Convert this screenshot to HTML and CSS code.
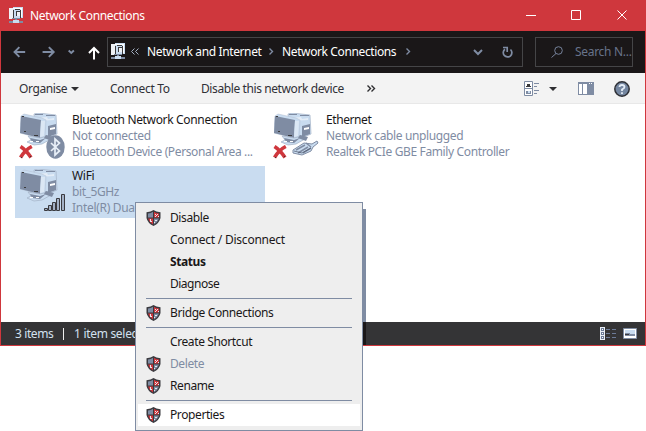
FILE: index.html
```
<!DOCTYPE html>
<html lang="en">
<head>
<meta charset="utf-8">
<title>Network Connections</title>
<link rel="stylesheet" href="styles.css">
</head>
<body>
<svg class="defs" aria-hidden="true">
  <symbol id="net" viewBox="0 0 16 17">
    <path fill="#eef1f5" d="M1 1h4v11H1z"/>
    <path fill="#c9dcf0" d="M5 0h10v11H5z"/>
    <path fill="#fff" d="M5 1h9v1H5zM13 2h1v8h-1z"/>
    <path fill="#3a3a3c" d="M5 3h1v8H5zM7 2h5v1H7zM8 4h4v1H8zM8 4h1v5H8zM12 3h1v8h-1z"/>
    <path fill="#eef1f5" d="M9 5h3v4H9z"/>
    <path fill="#7f8ca3" d="M4 11h8v1H4zM7 12h2v2H7zM1 14h14v2H1z"/>
    <path fill="#c9dcf0" d="M5 13h6v3H5z"/>
  </symbol>
  <symbol id="pcs" viewBox="0 0 40 36">
    <path fill="#c9dcf0" stroke="#a3b1c6" stroke-width=".7" d="M14 1l4-1 18 2 1 19-7 3-15-5z"/>
    <path fill="#7f8ca3" d="M28 13l8-2v10l-8 3zM15 1h8v1h-8zM26 2h9v1h-9z"/>
    <path fill="#e4edf7" d="M17 5l10-1 1 2 6-1v2l-17 1z"/>
    <path fill="#fff" d="M30 15l5-1v2l-5 1z"/>
    <path fill="#c9dcf0" stroke="#b3bfd0" stroke-width=".5" d="M1 3l3-2 18 4 4 2-1 17-6 1L0 20z"/>
    <path fill="#7f8ca3" d="M1 3l20 4-1 18L0 20z"/>
    <path fill="#dbe7f4" d="M21 8h4l-1 15-4 1z"/>
    <path fill="#3a3a3c" d="M2 3h2v1H2zM4 18h2v1H4zM14 22h4v1h-4z"/>
    <path fill="#c9dcf0" stroke="#a3b1c6" stroke-width=".7" d="M8 23l12 2 8-2 3 3-9 5-8 1-7-3 4-2z"/>
    <path fill="#7f8ca3" d="M10 25l10 2 6-2-6 5-8-1zM26 22l8 2-2 4-8-3z"/>
    <path fill="#fff" d="M10 28h3v1h-3zM16 28h3v1h-3z"/>
  </symbol>
  <symbol id="cross" viewBox="0 0 14 14">
    <path fill="none" stroke="#cf373d" stroke-width="3.600" d="M1.500 1.500Q7 5 12 12.500M12.800 1.500Q6 5 1.500 12.500"/>
    <path fill="#3a3a3c" d="M11 11h1v1h-1zM2 12h1v1H2z"/>
  </symbol>
  <symbol id="shield" viewBox="0 0 15 16">
    <path fill="#3a3a3f" d="M7.500 0Q10 2 14.500 2.200V8Q13.500 13 7.500 16Q1.500 13 .5 8V2.200Q5 2 7.500 0z"/>
    <path fill="#7f8ca3" d="M7 1.800V7.500H2V3.500Q5 3.200 7 1.800zM8 8.500h5q-1 3.500-5 6z"/>
    <path fill="#cf373d" d="M8 1.800q2 1.400 5 1.700v4H8zM7 8.500v6q-4-2.500-5-6z"/>
    <path fill="#e6e9ee" d="M9 4h1v1H9zM11 4h1v1h-1zM10 5h1v1h-1zM9 6h1v1H9zM12 6h1v1h-1zM4 9h1v3H4zM5 11h1v1H5zM9 10h2v1H9zM8 12h1v1H8z"/>
  </symbol>
</svg>

<div class="window">
  <header class="titlebar">
    <svg class="i-net"><use href="#net"/></svg>
    <span class="title">Network Connections</span>
    <svg class="caption" width="102" height="31" viewBox="0 0 102 31"><path fill="none" stroke="#fff" d="M0 15.500h10M45.500 10.500h9v9h-9zM91.500 10.500l9 9M100.500 10.500l-9 9"/></svg>
  </header>

  <nav class="nav">
    <svg class="arrows" width="90" height="30" viewBox="0 0 90 30">
      <g fill="none" stroke="#7f8ca3" stroke-width="2"><path d="M25 15H14M19 10l-5 5 5 5M43 15h11.500M49.500 10l5 5-5 5"/><path d="M70 13.500l2.700 2.500 2.700-2.500"/></g>
    </svg>
    <svg class="up" width="12" height="14" viewBox="0 0 12 14"><path fill="none" stroke="#fff" stroke-width="2" d="M6 13.500V2M1 7l5-5 5 5"/></svg>
    <div class="address">
      <svg class="i-net"><use href="#net"/></svg>
      <svg class="chev2" width="8" height="7" viewBox="0 0 8 7"><path fill="none" stroke="#a4b0c3" d="M3.500.5l-3 3 3 3M7.500.5l-3 3 3 3"/></svg>
      <span class="crumb c1">Network and Internet</span>
      <svg class="chev" width="5" height="7" viewBox="0 0 5 7"><path fill="none" stroke="#7f8ca3" stroke-width="1.400" d="M.5.500l3 3-3 3"/></svg>
      <span class="crumb c2">Network Connections</span>
      <svg class="chev" width="5" height="7" viewBox="0 0 5 7"><path fill="none" stroke="#7f8ca3" stroke-width="1.400" d="M.5.500l3 3-3 3"/></svg>
      <svg class="tools" width="40" height="14" viewBox="0 0 40 14"><g fill="none" stroke="#7f8ca3" stroke-width="2"><path d="M1 5l4 4 4-4"/><path stroke-width="1.700" d="M37.500 4.500A4.300 4.300 0 1 1 32 4.200M30 2.500h4.200V7"/></g></svg>
    </div>
    <div class="search">
      <svg width="12" height="12" viewBox="0 0 12 12"><g fill="none" stroke="#76829a"><circle cx="7.500" cy="4.500" r="3.800"/><path d="M5 7.500L.5 11.500"/></g></svg>
      <span>Search N...</span>
    </div>
  </nav>

  <div class="toolbar">
    <span class="t1">Organise</span><i class="tri"></i>
    <span class="t2">Connect To</span>
    <span class="t3">Disable this network device</span>
    <svg class="more" width="9" height="7" viewBox="0 0 9 7"><path fill="none" stroke="#2e2e31" stroke-width="1.400" d="M.5.500l3 3-3 3M4.500.500l3 3-3 3"/></svg>
    <svg class="view" width="16" height="16" viewBox="0 0 16 16"><path fill="#fff" stroke="#7f8ca3" d="M.5.500h8v14h-8zM.5 7.500h8"/><path fill="#7f8ca3" d="M10 2h5v1h-5zM10 5h3v1h-3zM10 9h5v1h-5zM10 12h3v1h-3zM2 10h5v3H2z"/><path fill="#3a3a3c" d="M3 3h3v2H3zM2 5h5v1H2z"/><path fill="#c9dcf0" d="M4 10h2v2H4z"/></svg>
    <i class="tri tri2"></i>
    <svg class="pane" width="16" height="13" viewBox="0 0 16 13"><path fill="#7f8ca3" d="M0 0h16v13H0z"/><path fill="#fff" d="M1 2h3v10H1zM5 2h4v10H5zM11 1h1v1h-1zM13 1h1v1h-1z"/></svg>
    <svg class="help" width="16" height="16" viewBox="0 0 16 16"><circle cx="8" cy="8" r="7.200" fill="#7486a0" stroke="#2e3036" stroke-width="1.500"/><path fill="none" stroke="#e4edf7" stroke-width="1.800" d="M5.500 6Q5.500 4 8 4t2.500 2Q10.500 7.200 8 8.500V10M8 11.300V13"/></svg>
  </div>

  <main class="content">
    <div class="item">
      <div class="icon"><svg class="pcs"><use href="#pcs"/></svg><svg class="x"><use href="#cross"/></svg>
        <svg class="bt" width="19" height="24" viewBox="0 0 19 24"><ellipse cx="9.500" cy="12" rx="9.200" ry="11.800" fill="#7f8ca3"/><path fill="none" stroke="#e9f0f8" stroke-width="1.700" d="M5 8l8.500 8-4.500 4V4l4.500 4L5 16"/></svg></div>
      <div class="text"><b class="n1">Bluetooth Network Connection</b><span class="n2">Not connected</span><span class="n3">Bluetooth Device (Personal Area ...</span></div>
    </div>
    <div class="item">
      <div class="icon"><svg class="pcs"><use href="#pcs"/></svg><svg class="x"><use href="#cross"/></svg>
        <svg class="plug" width="27" height="16" viewBox="0 0 27 16"><path fill="#c9dcf0" stroke="#7f8ca3" d="M1 10l11-7 8 1 5-3 1 2-5 4-2 4-9 4-9-2z"/><path fill="none" stroke="#7f8ca3" stroke-width="1.500" d="M4 10l9-5M6 13l10-6M11 13l8-5M14 3l5 4"/><path fill="none" stroke="#4a5568" stroke-width=".7" d="M2 11l8 2 9-5"/></svg></div>
      <div class="text"><b class="n4">Ethernet</b><span class="n5">Network cable unplugged</span><span class="n6">Realtek PCIe GBE Family Controller</span></div>
    </div>
    <div class="item selected">
      <div class="icon"><svg class="pcs"><use href="#pcs"/></svg>
        <svg class="bars" width="22" height="18" viewBox="0 0 22 18"><g fill="#a3b1c6" stroke="#3a3a3f"><path d="M.5 15.500h3v2h-3zM4.500 12.500h3v5h-3zM8.500 9.500h3v8h-3zM12.500 5.500h3v12h-3zM17.500 1.500h3v16h-3z"/></g></svg></div>
      <div class="text"><b>WiFi</b><span class="n7">bit_5GHz</span><span class="n8">Intel(R) Dual Band</span></div>
    </div>
  </main>

  <footer class="status">
    <span class="s1">3 items</span><i class="bar"></i><span class="s2">1 item selected</span>
    <svg width="40" height="13" viewBox="0 0 40 13"><path fill="#e9eef5" d="M0 0h5v13H0z"/><path fill="#6c7b98" d="M1 1h3v3H1zM1 5h3v3H1zM1 9h3v3H1zM6 2h4v1H6zM12 2h4v1h-4zM6 6h4v1H6zM12 6h4v1h-4zM6 10h4v1H6zM12 10h4v1h-4z"/><path fill="#fff" d="M2 2h1v1H2zM2 6h1v1H2zM2 10h1v1H2z"/><path fill="#fff" stroke="#7f8ca3" d="M23.500 1.500h13v10h-13z"/><path fill="#c9dcf0" d="M25 3h10v4H25z"/><path fill="#7f8ca3" d="M25 6h5v1h5v2H25z"/><path fill="#3a3a3f" d="M25 7h4v1h-4z"/></svg>
  </footer>
</div>

<div class="shadow"></div>
<ul class="menu">
  <li><svg><use href="#shield"/></svg><span class="m1">Disable</span></li>
  <li><span class="m2">Connect / Disconnect</span></li>
  <li><span class="strong">Status</span></li>
  <li><span class="m4">Diagnose</span></li>
  <li class="sep"></li>
  <li><svg><use href="#shield"/></svg><span class="m5">Bridge Connections</span></li>
  <li class="sep"></li>
  <li><span class="m6">Create Shortcut</span></li>
  <li class="off"><svg><use href="#shield"/></svg><span class="m7">Delete</span></li>
  <li><svg><use href="#shield"/></svg><span class="m8">Rename</span></li>
  <li class="sep"></li>
  <li class="hover"><svg><use href="#shield"/></svg><span class="m9">Properties</span></li>
</ul>
</body>
</html>
```
FILE: styles.css
```
* { box-sizing: border-box; }
body { margin: 0; width: 646px; height: 431px; overflow: hidden; background: #fff; position: relative; font: 12px/16px "Noto Sans", "Open Sans", sans-serif; letter-spacing: -.3px; color: #1a1718; }
svg { flex: none; display: block; }
span, b { white-space: nowrap; }
.defs { position: absolute; width: 0; height: 0; }
.window { width: 646px; height: 346px; display: flex; flex-direction: column; }
.i-net { width: 16px; height: 17px; }
.titlebar { height: 31px; background: #cf373d; color: #fff; display: flex; align-items: center; padding-left: 8px; }
.title { margin-left: 6px; letter-spacing: -.36px; }
.caption { margin-left: auto; margin-right: 18px; }
.nav { height: 42px; background: #1a1718; border-left: 1px solid #cf373d; border-right: 1px solid #cf373d; display: flex; align-items: center; color: #fff; }
.arrows { width: 87px; margin-top: -1px; }
.up { margin-right: 7px; margin-top: 1px; }
.address { width: 416px; height: 30px; margin-top: -1px; border: 1px solid #454547; display: flex; align-items: center; padding-left: 2px; }
.chev2 { margin-left: 5px; margin-right: 8px; }
.crumb { letter-spacing: -.38px; }
.c1 { width: 122px; }
.c2 { width: 124px; }
.chev { margin-right: 8px; }
.tools { margin-left: auto; margin-right: 9px; }
.search { width: 98px; height: 30px; margin-top: -1px; margin-left: 12px; border: 1px solid #454547; display: flex; align-items: center; padding-left: 15px; color: #68738a; }
.search span { margin-left: 12px; }
.toolbar { height: 31px; background: #f3f3f3; border: solid #cf373d; border-width: 0 1px; display: flex; align-items: center; padding-left: 18px; color: #303036; box-shadow: inset 0 -1px #e8e8e8; }
.t1 { width: 52px; letter-spacing: -.4px; }
.t2 { width: 91px; }
.t3 { width: 166px; letter-spacing: -.4px; }
.tri { border: 4px solid transparent; border-top-color: #2e2e31; border-bottom: 0; margin-right: 31px; }
.tri2 { margin: 0 21px 0 9px; }
.view { margin-left: auto; }
.help { margin: 0 15px 0 20px; }
.content { height: 218px; background: #fff; border: solid #cf373d; border-width: 0 1px; padding: 6px 0 0 14px; display: grid; grid-template-columns: 250px 250px; grid-template-rows: 52px 52px; column-gap: 4px; row-gap: 4px; }
.item { display: flex; color: #7f8ca3; }
.icon { width: 57px; position: relative; }
.pcs { width: 40px; height: 36px; margin: 3px 0 0 5px; }
.x { position: absolute; width: 14px; height: 14px; left: 4px; top: 35px; }
.bt { position: absolute; left: 31px; top: 25px; }
.plug { position: absolute; left: 23px; top: 30px; }
.bars { position: absolute; left: 29px; top: 27px; }
.text { display: flex; flex-direction: column; padding-top: 2px; }
.text b { font-weight: 400; color: #1a1718; }
.text .n1 { letter-spacing: -.34px; }
.n3, .n6 { letter-spacing: -.37px; }
.n5 { letter-spacing: -.38px; }
.n4 { letter-spacing: -.42px; }
.n7 { letter-spacing: -.4px; }
.selected { background: #c9dcf0; }
.status { height: 24px; background: #343436; border: 1px solid #cf373d; border-top: 0; color: #d3e1f0; display: flex; align-items: center; padding-left: 14px; }
.s1 { width: 48px; letter-spacing: -.4px; }
.bar { width: 1px; height: 12px; background: #eee; margin-right: 10px; }
.status svg { margin-left: auto; margin-right: 5px; }
.shadow { position: absolute; left: 363px; top: 209px; width: 3px; height: 136px; background: linear-gradient(#7f8ca3 113px, #1a1718 113px); }
.menu { position: absolute; left: 135px; top: 202px; width: 228px; height: 229px; margin: 0; padding: 4px 2px; border: 1px solid #7f8ca3; background: #eee; list-style: none; }
.menu li { height: 22px; display: flex; align-items: center; padding-left: 8px; }
.menu li svg { width: 15px; height: 16px; margin-right: -15px; }
.menu li span { margin-left: 24px; letter-spacing: -.4px; }
.menu li .m2 { letter-spacing: -.23px; }
.menu li .m4 { letter-spacing: -.5px; }
.menu .sep { height: 7px; margin: 0 8px; padding: 0; background: linear-gradient(#7f8ca3, #7f8ca3) 0 3px / 100% 1px no-repeat; }
.menu li .strong { font-weight: 700; }
.off { color: #7f8ca3; }
.hover { background: #fff; }
```
